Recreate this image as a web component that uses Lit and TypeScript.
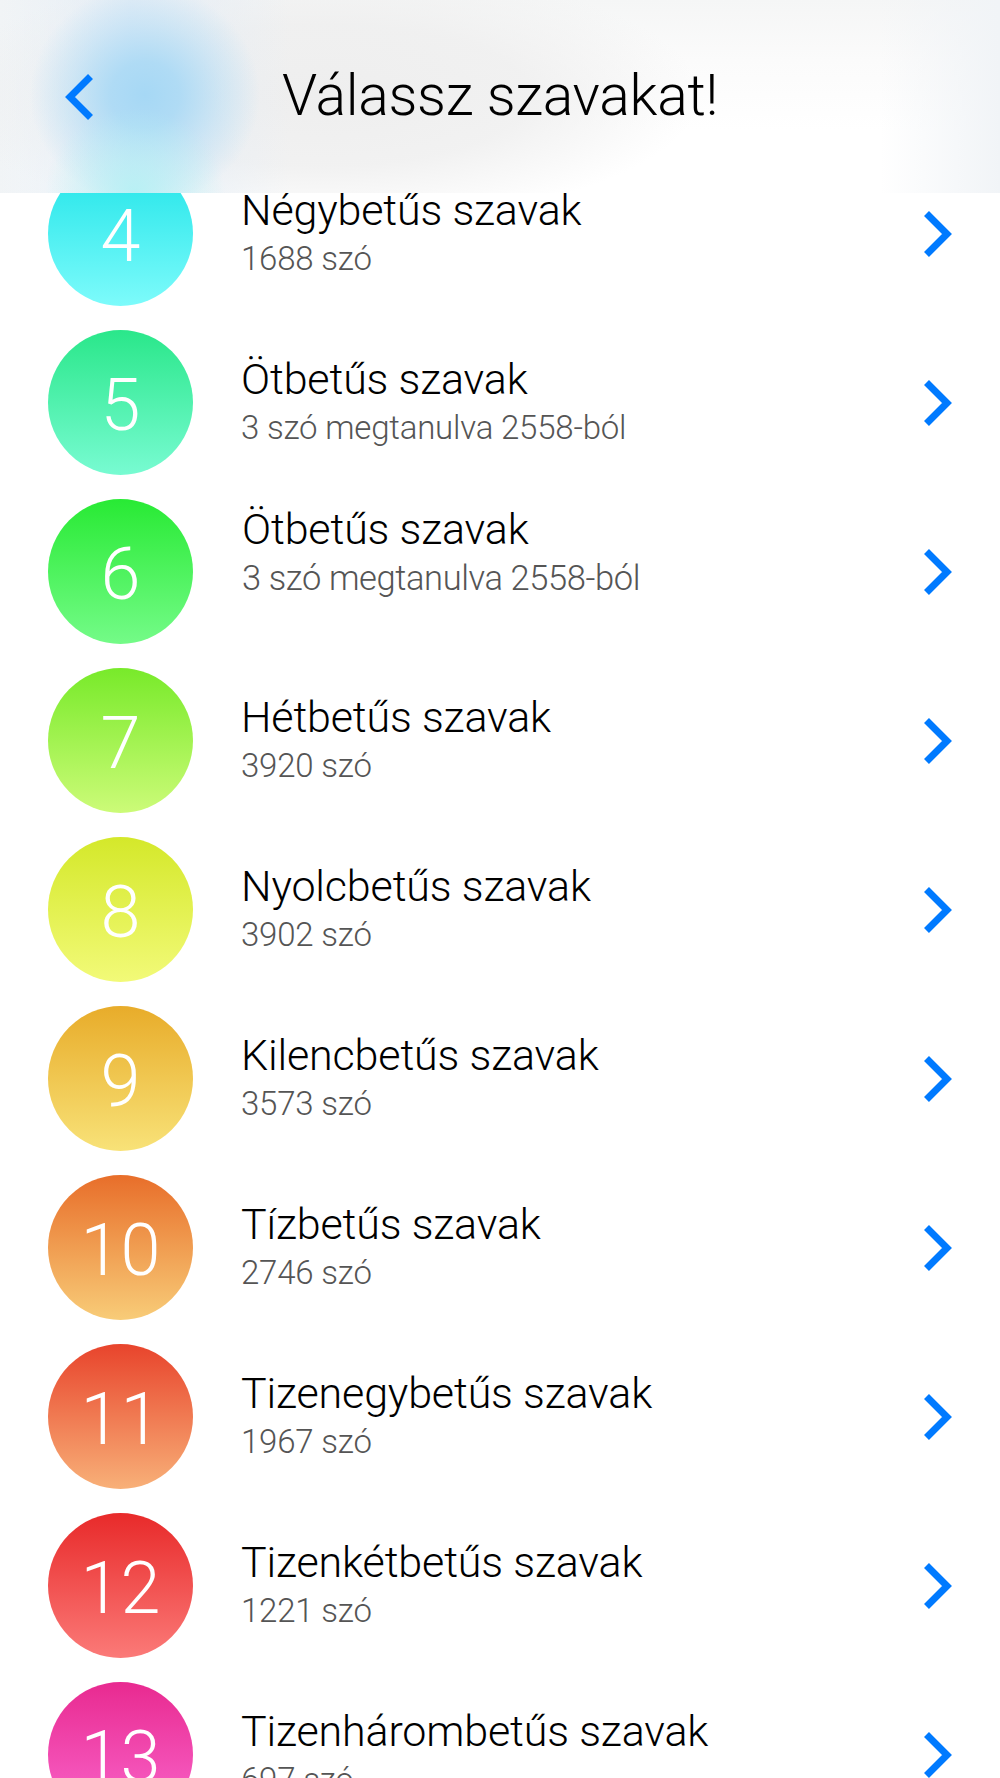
import { LitElement, html, css, svg } from 'lit'
import { customElement } from 'lit/decorators.js'

interface WordGroup {
  n: number
  title: string
  sub: string
  from: string
  to: string
  raised?: boolean
}

const GROUPS: WordGroup[] = [
  { n: 4, title: 'Négybetűs szavak', sub: '1688 szó', from: '#20e4e8', to: '#7dfbfb' },
  { n: 5, title: 'Ötbetűs szavak', sub: '3 szó megtanulva 2558-ból', from: '#2ae78a', to: '#78fbd2' },
  { n: 6, title: 'Ötbetűs szavak', sub: '3 szó megtanulva 2558-ból', from: '#28ea34', to: '#74fb88', raised: true },
  { n: 7, title: 'Hétbetűs szavak', sub: '3920 szó', from: '#78ea2a', to: '#ccfb78' },
  { n: 8, title: 'Nyolcbetűs szavak', sub: '3902 szó', from: '#d4e82a', to: '#f2fa78' },
  { n: 9, title: 'Kilencbetűs szavak', sub: '3573 szó', from: '#e8ac2a', to: '#f8e278' },
  { n: 10, title: 'Tízbetűs szavak', sub: '2746 szó', from: '#e86e2a', to: '#f8cc78' },
  { n: 11, title: 'Tizenegybetűs szavak', sub: '1967 szó', from: '#e8442c', to: '#f8b078' },
  { n: 12, title: 'Tizenkétbetűs szavak', sub: '1221 szó', from: '#e82a2a', to: '#fb7a78' },
  { n: 13, title: 'Tizenhárombetűs szavak', sub: '697 szó', from: '#e82a90', to: '#fb6ad0' },
]

const chevron = (points: string) => svg`<polyline points=${points} fill="none" stroke="#007aff" stroke-width="7" />`

@customElement('app-root')
export class AppRoot extends LitElement {
  render() {
    return html`
      <header class="bar">
        <svg class="back" width="40" height="56" viewBox="0 0 40 56">${chevron('32.5,7.5 12,28 32.5,48.5')}</svg>
        <h1 class="heading">Válassz szavakat!</h1>
      </header>
      <ul class="list">
        ${GROUPS.map(
          (g) => html`
            <li class="row ${g.raised ? 'raised' : ''}">
              <div class="badge" style="background: linear-gradient(${g.from}, ${g.to})">${g.n}</div>
              <div class="text">
                <div class="title">${g.title}</div>
                <div class="sub">${g.sub}</div>
              </div>
              <svg class="next" width="40" height="56" viewBox="0 0 40 56">${chevron('13.5,7.5 34,28 13.5,48.5')}</svg>
            </li>
          `
        )}
      </ul>
    `
  }

  static styles = css`
    :host {
      display: block;
      position: relative;
      height: 1778px;
      overflow: hidden;
      background: #fff;
      font-family: Roboto, 'Liberation Sans', sans-serif;
      font-weight: 300;
    }

    /* frosted bar: the blurred circle and titles scrolled under it are painted as gradients */
    .bar {
      position: absolute;
      inset: 0 0 auto 0;
      z-index: 1;
      height: 193px;
      background:
        radial-gradient(ellipse 90px 85px at 135px 193px, rgba(180, 241, 244, 0.9), rgba(180, 241, 244, 0)),
        radial-gradient(ellipse 115px 110px at 145px 95px, #a6d8f5 0%, rgba(166, 216, 245, 0.85) 30%, rgba(166, 216, 245, 0.4) 65%, rgba(166, 216, 245, 0) 100%),
        linear-gradient(to right, rgba(226, 236, 246, 0) 0, rgba(226, 236, 246, 0.9) 130px, rgba(226, 236, 246, 0) 290px),
        radial-gradient(ellipse 380px 130px at 320px 95px, #eeeeee 0%, rgba(238, 238, 238, 0.8) 55%, rgba(238, 238, 238, 0) 100%),
        linear-gradient(to right, rgba(241, 244, 246, 1) 0, rgba(241, 244, 246, 0) 130px, rgba(241, 244, 247, 0) 880px, rgba(241, 244, 247, 1) 1000px),
        linear-gradient(to bottom, #f5f6f6 0, #fbfbfb 60px, #fff 130px);
    }

    .back {
      position: absolute;
      left: 58px;
      top: 69px;
    }

    .heading {
      margin: 0;
      padding-top: 60px;
      text-align: center;
      font-size: 57px;
      font-weight: 300;
      line-height: 72px;
      color: #000;
      letter-spacing: -0.3px;
    }

    .list {
      list-style: none;
      margin: 0;
      padding: 149px 0 0;
    }

    .row {
      display: flex;
      align-items: center;
      height: 169px;
      padding: 0 48px;
    }

    .badge {
      flex: none;
      width: 145px;
      height: 145px;
      padding-top: 5px;
      box-sizing: border-box;
      border-radius: 50%;
      display: flex;
      align-items: center;
      justify-content: center;
      color: #fff;
      font-size: 72px;
      font-weight: 300;
    }

    .text {
      flex: 1;
      margin-left: 48px;
      padding-bottom: 3px;
    }

    .title {
      font-size: 43px;
      line-height: 50px;
      color: #000;
      letter-spacing: -0.15px;
    }

    .sub {
      font-size: 33px;
      line-height: 40px;
      margin-top: 4px;
      color: #555;
      letter-spacing: -0.2px;
    }

    .raised .text {
      padding: 0 0 41px 1px;
    }

    .raised .sub {
      font-size: 34.5px;
      letter-spacing: -0.4px;
    }

    .next {
      flex: none;
      margin-right: -1px;
    }
  `
}

declare global {
  interface HTMLElementTagNameMap {
    'app-root': AppRoot
  }
}
